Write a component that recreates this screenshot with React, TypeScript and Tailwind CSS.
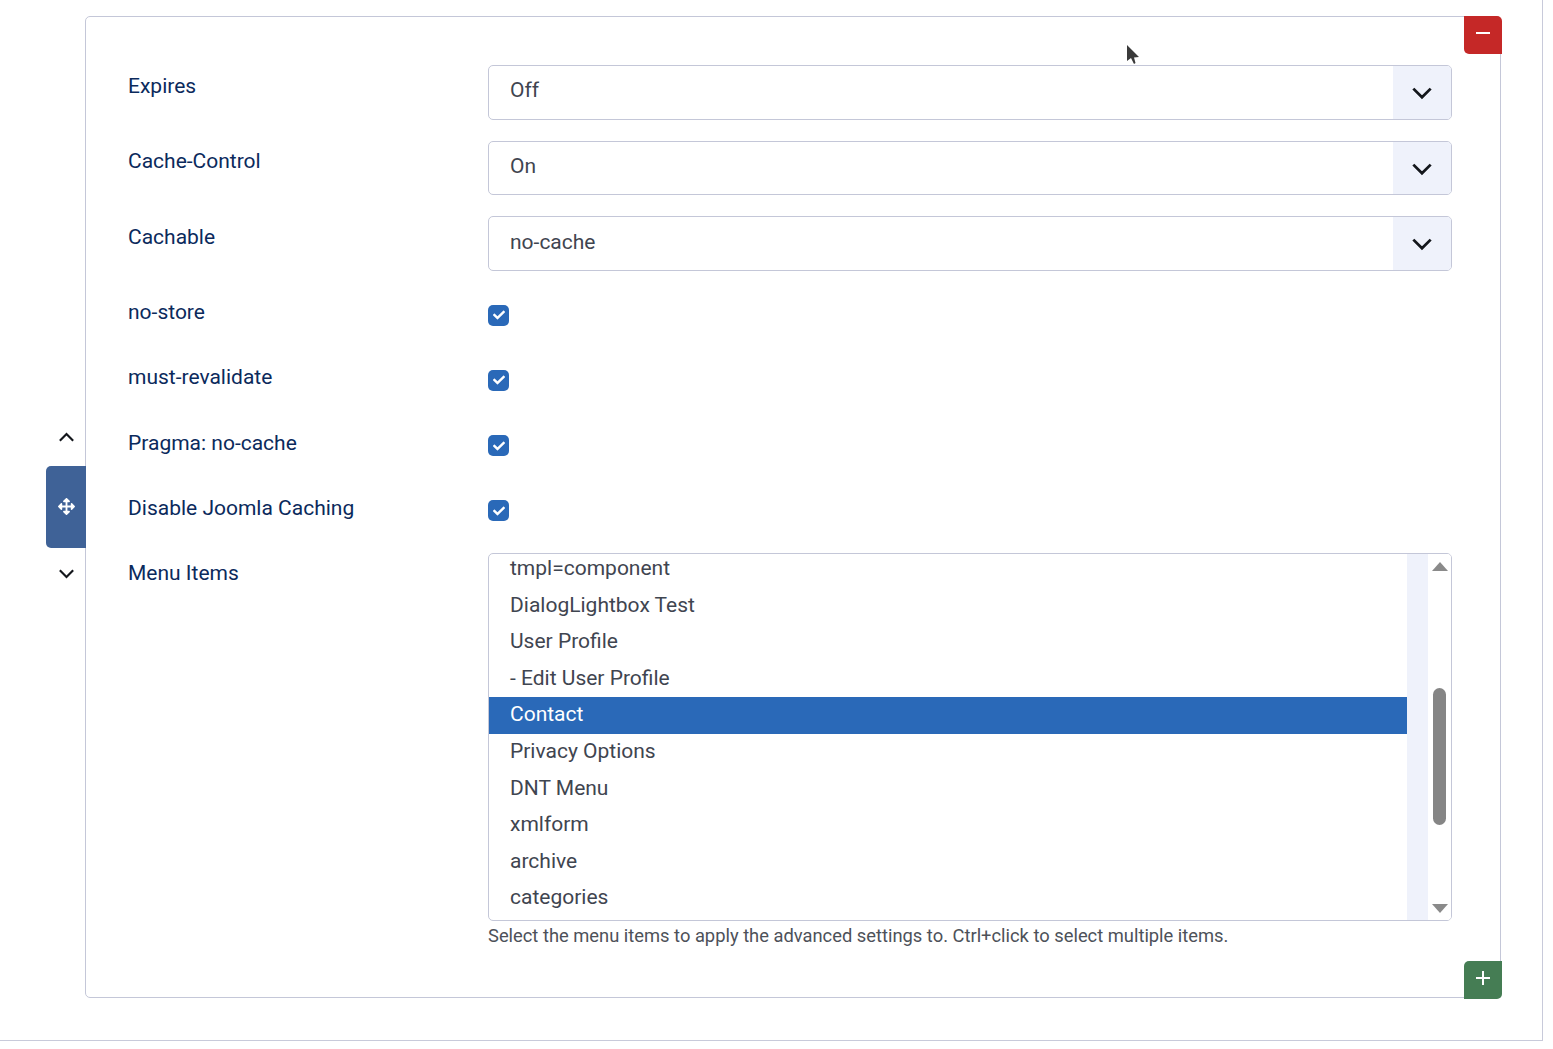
import { FaArrowsAlt, FaCheck } from "react-icons/fa";

const Chevron = ({ up = false, className = "", sw = "2.6" }: { up?: boolean; className?: string; sw?: string }) => (
  <svg viewBox="0 0 20 12" className={className} fill="none" stroke="currentColor" strokeWidth={sw}>
    <path d={up ? "M2 10.5 L10 2.5 L18 10.5" : "M2 1.5 L10 9.5 L18 1.5"} />
  </svg>
);

const SelectRow = ({ label, value, h, labelPad, valuePad }: { label: string; value: string; h: string; labelPad: string; valuePad: string }) => (
  <div className={`flex ${h}`}>
    <div className={`w-[360px] ${labelPad} text-[21px] leading-[32px] text-[#0b2a5c]`}>{label}</div>
    <div className="flex-1 flex rounded-[5px] border border-[#c4c7d8] bg-white overflow-hidden">
      <div className={`flex-1 pl-[21px] ${valuePad} text-[21px] leading-[32px] text-[#3f4550]`}>{value}</div>
      <div className="w-[58px] bg-[#eff2fb] flex items-center justify-center text-[#14171c] pt-[2px]">
        <Chevron className="w-[22px] h-[13px]" />
      </div>
    </div>
  </div>
);

const CheckRow = ({ label }: { label: string }) => (
  <div className="flex h-[44.25px]">
    <div className="w-[360px] pt-[4px] text-[21px] leading-[32px] text-[#0b2a5c]">{label}</div>
    <div className="pt-[12.6px]">
      <div className="w-[21px] h-[21px] rounded-[5px] bg-[#2a69b8] flex items-center justify-center text-white">
        <FaCheck className="w-[12px] h-[12px]" />
      </div>
    </div>
  </div>
);

const items = ["tmpl=component", "DialogLightbox Test", "User Profile", "- Edit User Profile", "Contact", "Privacy Options", "DNT Menu", "xmlform", "archive", "categories"];

export default function App() {
  return (
    <div className="relative w-[1553px] h-[1049px] bg-white overflow-hidden" style={{ fontFamily: "Roboto, sans-serif" }}>
      <div className="w-[1543px] h-[1041px] border-r border-b border-[#c8cada] pl-[85px] pt-[16px]">
        <div className="relative w-[1416px] h-[982px] border border-[#c4c7d8] rounded-[5px] pl-[42px] pr-[48px] pt-[48px] flex flex-col gap-[21px]">
          <SelectRow label="Expires" value="Off" h="h-[55px]" labelPad="pt-[5px]" valuePad="pt-[8px]" />
          <SelectRow label="Cache-Control" value="On" h="h-[54px]" labelPad="pt-[4px]" valuePad="pt-[8px]" />
          <SelectRow label="Cachable" value="no-cache" h="h-[55px]" labelPad="pt-[5px]" valuePad="pt-[9px]" />
          <CheckRow label="no-store" />
          <CheckRow label="must-revalidate" />
          <CheckRow label="Pragma: no-cache" />
          <CheckRow label="Disable Joomla Caching" />
          <div className="flex">
            <div className="w-[360px] pt-[4px] text-[21px] leading-[32px] text-[#0b2a5c]">Menu Items</div>
            <div className="flex-1">
              <div className="flex h-[368px] rounded-[5px] border border-[#c4c7d8] overflow-hidden">
                <div className="w-[918px] overflow-hidden">
                  <div className="-mt-[3px]">
                    {items.map((t) => (
                      <div
                        key={t}
                        className={`h-[36.6px] pl-[21px] text-[21px] leading-[34px] ${t === "Contact" ? "bg-[#2a69b8] text-white" : "text-[#3f4550]"}`}
                      >
                        {t}
                      </div>
                    ))}
                  </div>
                </div>
                <div className="w-[21px] bg-[#eff2fb]" />
                <div className="relative flex-1 bg-white">
                  <div className="absolute left-[4px] top-[8px] w-0 h-0 border-l-[8px] border-r-[8px] border-b-[9px] border-l-transparent border-r-transparent border-b-[#8a8a8a]" />
                  <div className="absolute left-[5px] top-[134px] w-[13px] h-[137px] rounded-[7px] bg-[#858585]" />
                  <div className="absolute left-[4px] bottom-[7px] w-0 h-0 border-l-[8px] border-r-[8px] border-t-[9px] border-l-transparent border-r-transparent border-t-[#8a8a8a]" />
                </div>
              </div>
              <div className="mt-[2px] text-[18.33px] leading-[26px] text-[#4d5159]">
                Select the menu items to apply the advanced settings to. Ctrl+click to select multiple items.
              </div>
            </div>
          </div>

          <button className="absolute left-[1378px] -top-px w-[38px] h-[38px] bg-[#c52827] rounded-tr-[5px] rounded-bl-[5px] flex items-center justify-center pb-[4px]">
            <span className="block w-[14px] h-[2.5px] bg-white" />
          </button>
          <button className="absolute left-[1378px] top-[944px] w-[38px] h-[38px] bg-[#457d54] rounded-tl-[5px] rounded-br-[5px] flex items-center justify-center pb-[4px]">
            <span className="relative block w-[14px] h-[14px]">
              <span className="absolute left-0 top-[6px] w-[14px] h-[2.4px] bg-white" />
              <span className="absolute left-[6px] top-0 w-[2.4px] h-[14px] bg-white" />
            </span>
          </button>

          <div className="absolute -left-[28px] top-[415px] text-[#14171c]">
            <Chevron up className="w-[17px] h-[10px]" />
          </div>
          <div className="absolute -left-[40px] top-[449px] w-[40px] h-[82px] bg-[#3f6297] rounded-l-[5px] flex items-center justify-center text-white pb-[2px]">
            <FaArrowsAlt className="w-[17px] h-[17px]" />
          </div>
          <div className="absolute -left-[28px] top-[552px] text-[#14171c]">
            <Chevron className="w-[17px] h-[10px]" />
          </div>
        </div>
      </div>

      <svg className="absolute left-[1126px] top-[44px] w-[14px] h-[22px]" viewBox="0 0 14 22">
        <path d="M1 1 L1 17 L5 14 L8 20 L9.5 19 L8 13.5 L13 13 Z" fill="#3a3a3a" />
      </svg>
    </div>
  );
}
